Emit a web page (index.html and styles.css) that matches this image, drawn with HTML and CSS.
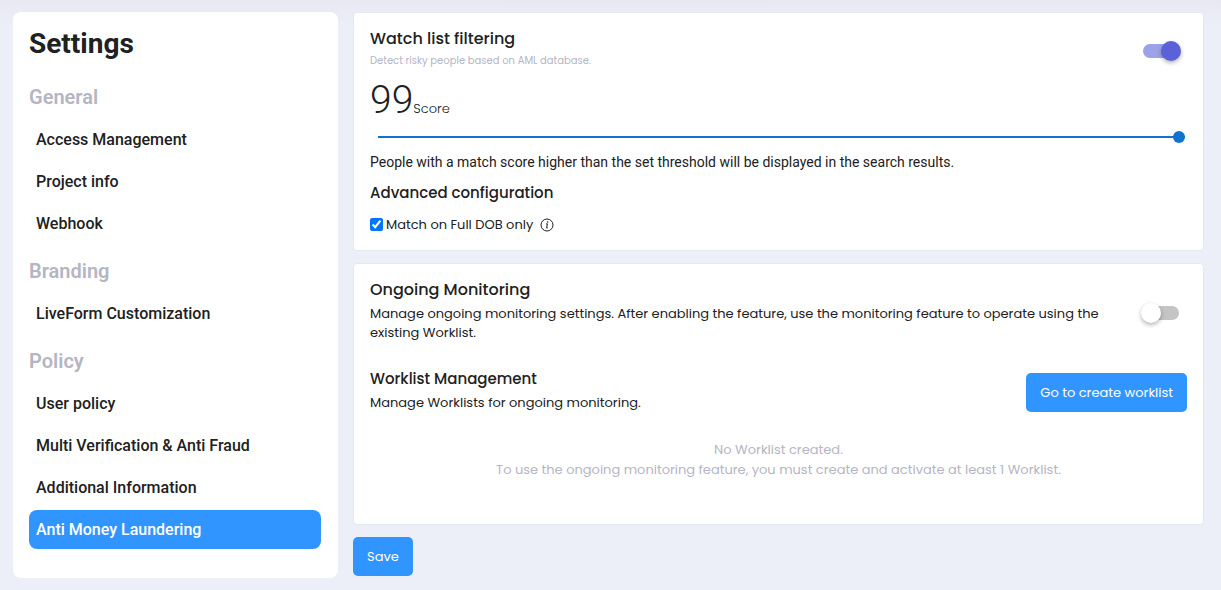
FILE: index.html
```html
<!DOCTYPE html>
<html lang="en">
<head>
  <meta charset="UTF-8" />
  <title>Settings | Anti Money Laundering</title>
  <meta name="viewport" content="width=device-width, initial-scale=1.0"/>
  <link rel="stylesheet" href="styles.css">
</head>
<body>

<div class="page">
  <nav class="sidebar">
    <h1>Settings</h1>

    <h2>General</h2>
    <ul>
      <li><a href="#access">Access Management</a></li>
      <li><a href="#project">Project info</a></li>
      <li><a href="#webhook">Webhook</a></li>
    </ul>

    <h2>Branding</h2>
    <ul>
      <li><a href="#liveform">LiveForm Customization</a></li>
    </ul>

    <h2>Policy</h2>
    <ul>
      <li><a href="#user-policy">User policy</a></li>
      <li><a href="#multi">Multi Verification &amp; Anti Fraud</a></li>
      <li><a href="#additional">Additional Information</a></li>
      <li><a href="#aml" class="active" aria-current="page">Anti Money Laundering</a></li>
    </ul>
  </nav>

  <main class="content">
    <section class="card">
      <div class="card-row">
        <div class="card-text">
          <h3 id="watchTitle">Watch list filtering</h3>
          <p class="hint">Detect risky people based on AML database.</p>
        </div>
        <input type="checkbox" role="switch" class="switch" aria-labelledby="watchTitle" checked>
      </div>

      <div class="score">
        <output class="score-value" id="scoreValue" for="scoreRange">99</output>
        <label for="scoreRange">Score</label>
      </div>
      <input type="range" class="slider" id="scoreRange" min="0" max="99" value="99">
      <p class="threshold">People with a match score higher than the set threshold will be displayed in the search results.</p>

      <h4>Advanced configuration</h4>
      <div class="option">
        <input type="checkbox" id="fullDob" checked>
        <label for="fullDob">Match on Full DOB only</label>
        <svg class="info" viewBox="0 0 14 14" aria-hidden="true">
          <circle cx="7" cy="7" r="6" fill="none" stroke="currentColor"/>
          <circle cx="7.6" cy="4" r=".8" fill="currentColor"/>
          <path d="M6 5.9h1.4L6.6 10h1.2" fill="none" stroke="currentColor"/>
        </svg>
      </div>
    </section>

    <section class="card monitoring">
      <div class="card-row">
        <div class="card-text">
          <h3 id="ongoingTitle">Ongoing Monitoring</h3>
          <p>Manage ongoing monitoring settings. After enabling the feature, use the monitoring feature to operate using the existing Worklist.</p>
        </div>
        <input type="checkbox" role="switch" class="switch" aria-labelledby="ongoingTitle">
      </div>

      <div class="card-row worklist">
        <div class="card-text">
          <h4>Worklist Management</h4>
          <p>Manage Worklists for ongoing monitoring.</p>
        </div>
        <button type="button" class="btn">Go to create worklist</button>
      </div>

      <p class="empty">No Worklist created.<br>To use the ongoing monitoring feature, you must create and activate at least 1 Worklist.</p>
    </section>

    <button type="button" class="btn">Save</button>
  </main>
</div>

<script>
  const range = document.getElementById("scoreRange");
  range.addEventListener("input", () => {
    document.getElementById("scoreValue").textContent = range.value;
  });
</script>
</body>
</html>
```
FILE: styles.css
```css
* {
  box-sizing: border-box;
}

body {
  font-family: Poppins, Inter, sans-serif;
  font-size: 13px;
  line-height: 19px;
  margin: 0;
  color: #212121;
  background: #eceff8 linear-gradient(#e8e8f2, #eceff8) 0 0 / 100% 26px no-repeat;
}

h1, h2, h3, h4, p, ul {
  margin: 0;
  padding: 0;
}

.page {
  display: flex;
  align-items: flex-start;
  gap: 15px;
  padding: 12px 17px 12px 13px;
}

/* Sidebar */
.sidebar {
  flex: 0 0 325px;
  padding: 16px 17px 29px 16px;
  background: white;
  border-radius: 8px;
  font-family: Roboto, sans-serif;
}

.sidebar h1 {
  font-size: 28px;
  line-height: 32px;
  font-weight: 700;
  margin-bottom: 25px;
}

.sidebar h2 {
  font-size: 20px;
  line-height: 25px;
  font-weight: 600;
  color: #b5b5c3;
  margin-bottom: 10px;
}

.sidebar ul {
  display: flex;
  flex-direction: column;
  gap: 3px;
  list-style: none;
}

.sidebar ul + h2 {
  margin-top: 16px;
}

.sidebar a {
  display: block;
  padding: 0 7px;
  border-radius: 8px;
  font-size: 16px;
  line-height: 39px;
  font-weight: 500;
  color: #212121;
  text-decoration: none;
}

.sidebar a.active {
  background: #3195ff;
  color: white;
}

/* Cards */
.content {
  flex: 1;
  min-width: 0;
}

.card {
  background: white;
  border: 1px solid #e5e8ee;
  border-radius: 4px;
  padding: 16px;
  margin-bottom: 12px;
}

.card-row {
  display: flex;
  align-items: center;
  justify-content: space-between;
  gap: 24px;
}

.card-text {
  padding-bottom: 4px;
}

h3, h4 {
  font-size: 16px;
  line-height: 20px;
  font-weight: 500;
  margin-bottom: 4px;
}

h4 {
  font-size: 15px;
}

.hint {
  font-size: 10px;
  line-height: 15px;
  color: #b5b5c3;
}

.score {
  display: flex;
  align-items: baseline;
  font-weight: 300;
}

.score-value {
  font-family: Roboto, sans-serif;
  font-size: 39px;
  line-height: 56px;
}

.threshold {
  font-family: Roboto, sans-serif;
  font-size: 14px;
  margin: 10px 0 11px;
}

.option {
  display: flex;
  align-items: center;
  margin-top: 12px;
}

.option input {
  margin: 0 3px 0 0;
}

.info {
  width: 14px;
  height: 14px;
  margin-left: 7px;
}

.monitoring {
  padding-bottom: 44px;
}

.worklist {
  margin-top: 23px;
}

.empty {
  margin-top: 24px;
  line-height: 20px;
  text-align: center;
  color: #b5b5c3;
}

/* Controls */
.switch {
  appearance: none;
  display: flex;
  align-items: center;
  flex: none;
  width: 36px;
  height: 14px;
  margin: 0 8px;
  border-radius: 7px;
  background: #c4c4c4;
  cursor: pointer;
}

.switch::before {
  content: "";
  flex: none;
  width: 20px;
  height: 20px;
  margin-left: -2px;
  border-radius: 50%;
  background: white;
  box-shadow: 0 2px 4px rgba(0,0,0,0.3);
}

.switch:checked {
  background: #9da1e8;
}

.switch:checked::before {
  margin-left: 18px;
  background: #5b62d9;
}

.slider {
  appearance: none;
  display: block;
  width: calc(100% - 10px);
  height: 12px;
  margin: 3px 2px 0 8px;
  background: linear-gradient(#1273ce, #1273ce) center / 100% 2px no-repeat;
  cursor: pointer;
}

.slider::-webkit-slider-thumb {
  appearance: none;
  width: 12px;
  height: 12px;
  border-radius: 50%;
  background: #1273ce;
}

.btn {
  flex: none;
  padding: 10px 14px;
  border: 0;
  border-radius: 5px;
  background: #3195ff;
  color: white;
  font: inherit;
  cursor: pointer;
}
```
